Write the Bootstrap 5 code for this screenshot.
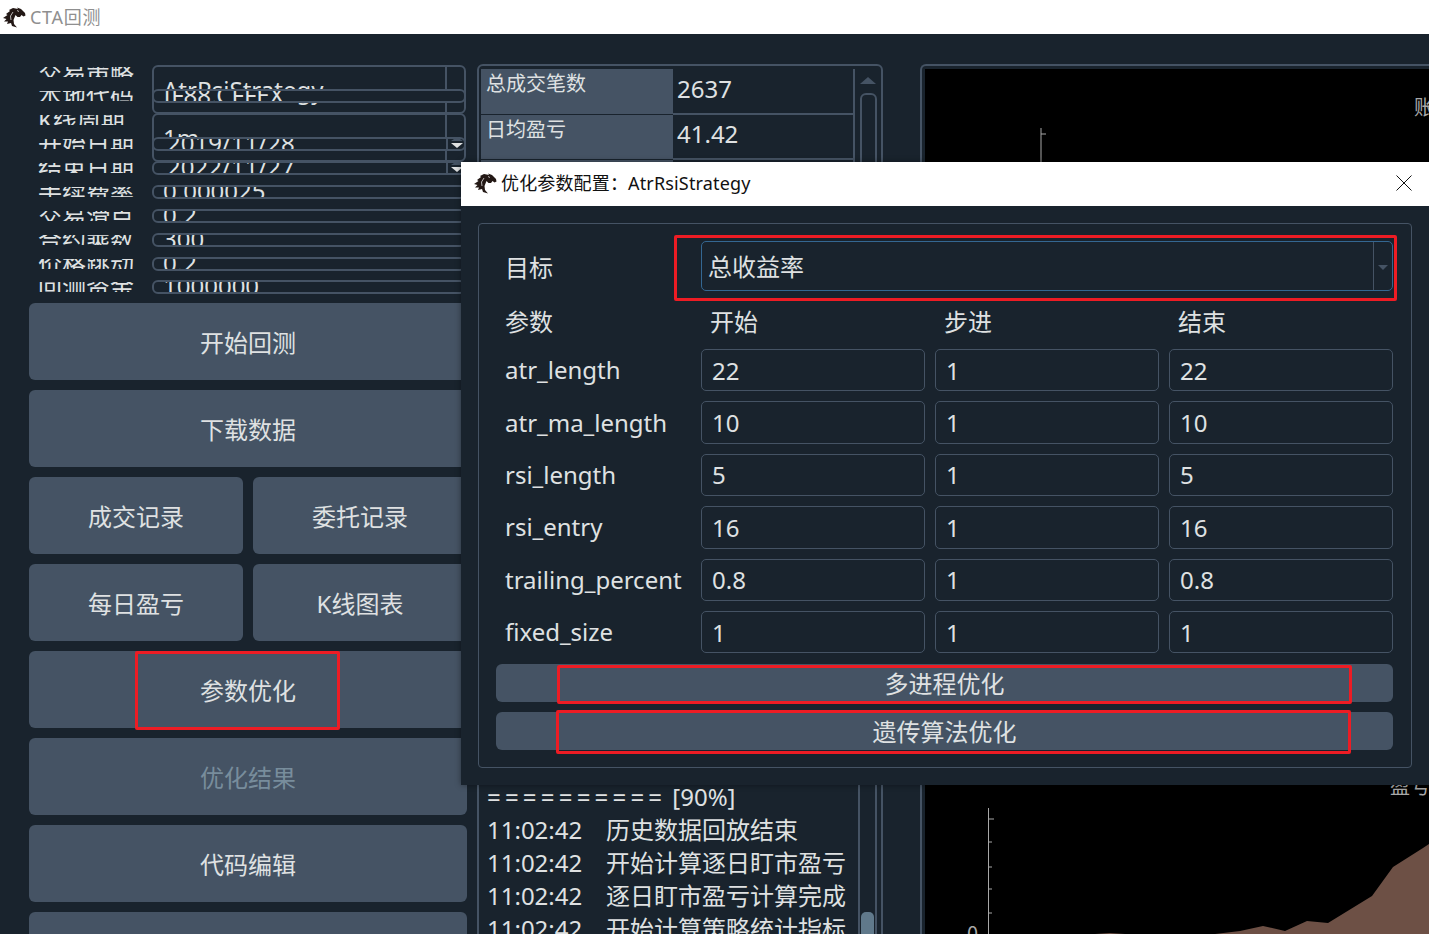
<!DOCTYPE html>
<html lang="zh">
<head>
  <meta charset="UTF-8">
  <title>CTA回测</title>
  <link rel="stylesheet" href="https://cdn.jsdelivr.net/npm/bootstrap@5.3.0/dist/css/bootstrap.min.css">
  <style>
    body {
      height: 934px; overflow: hidden; position: relative;
      background: #19232d; color: #dfe1e2;
      font-family: "Noto Sans", "Noto Sans CJK SC", sans-serif; font-size: 24px;
    }
    .title-main { height: 34px; background: #fff; color: #8f8f8f; font-size: 18px; letter-spacing: .7px; padding-left: 2px; }
    .horse { width: 24px; height: 22px; flex: none; }

    .work { padding: 30px 0 0 29px; height: 900px; overflow: hidden; gap: 10px; }
    .left-col { width: 438px; flex: none; margin-top: -4px; }

    /* squashed form, rows are narrower than the widgets in them */
    .frow { height: 24px; padding-left: 9px; padding-right: 1px; }
    .frow.tight { height: 23px; }
    .flabel { width: 114px; flex: none; height: 10px; line-height: 10px; overflow: hidden; white-space: nowrap; }
    .fedit {
      position: relative; flex: 1; height: 14px; padding: 0 9px; line-height: 7px;
      overflow: hidden; white-space: nowrap; background: #19232d;
      border: 2px solid #455364; border-radius: 6px;
    }
    .fedit.date { padding-left: 13px; }
    .fcombo {
      position: relative; flex: 1; height: 49px; align-self: flex-start; margin-top: 5px; margin-bottom: -30px;
      border: 2px solid #455364; border-radius: 6px; background: #19232d;
      padding-left: 9px; line-height: 46px; overflow: hidden;
    }
    .fcombo::after { content: ""; position: absolute; top: 0; bottom: 0; right: 17px; border-left: 2px solid #455364; }
    .dspin { position: absolute; left: 417px; top: 5px; width: 21px; height: 14px; border-left: 2px solid #455364; z-index: 2; }
    .tri-up, .tri-down { position: absolute; left: 3px; width: 0; height: 0; border-left: 6px solid transparent; border-right: 6px solid transparent; }
    .tri-up { top: 0; border-bottom: 4px solid #455364; }
    .tri-down { top: 6px; border-top: 5px solid #dfe1e2; }

    .side-btns { margin-top: 5px; gap: 10px; }
    .btn-pair { gap: 10px; }
    .act-btn.btn {
      height: 77px; flex: none; background: #455364; border: 0; border-radius: 6px;
      color: #dfe1e2; font-size: 24px; padding: 2px 0 0;
    }
    .btn-pair .act-btn.btn { flex: 1 1 0; }
    .act-btn.btn:disabled { background: #455364; color: #788d9c; opacity: 1; }

    .mid-col { width: 406px; flex: none; gap: 8px; }
    .grp { border: 2px solid #455364; border-radius: 6px; }
    .stat-grp { height: 620px; flex: none; padding: 3px 0 0 2px; position: relative; }
    .stat-tbl { width: 374px; border-collapse: collapse; }
    .stat-tbl th {
      width: 192px; height: 45px; background: #455364; font-size: 20px; font-weight: 400;
      vertical-align: top; padding: 0 5px; border-bottom: 1px solid #19232d;
    }
    .stat-tbl td { padding: 0 4px 5px; border-bottom: 2px solid #455364; border-right: 2px solid #455364; }
    .sb-up { position: absolute; left: 381px; top: 11px; width: 0; height: 0; border-left: 8px solid transparent; border-right: 8px solid transparent; border-bottom: 7px solid #455364; }
    .sb-handle { position: absolute; left: 381px; top: 27px; width: 17px; height: 200px; border: 2px solid #455364; border-radius: 6px; }

    .log-grp { height: 400px; flex: none; padding: 86px 0 0 8px; position: relative; }
    .log-line { line-height: 33px; white-space: nowrap; }
    .log-time { display: inline-block; width: 119px; }
    .log-prog { letter-spacing: 4.2px; margin-right: 6px; }
    .log-bar { position: absolute; left: 379px; top: 0; bottom: 0; width: 19px; border-left: 2px solid #455364; border-right: 2px solid #455364; }
    .log-handle { position: absolute; left: 1px; top: 218px; width: 13px; height: 60px; background: #60798b; border-radius: 5px; }

    .chart-col { flex: 1; margin-left: 27px; min-width: 0; border-right: 0; border-bottom: 0; border-radius: 6px 0 0 0; padding: 3px 0 0 3px; }
    .chart-svg { display: block; background: #000; width: 504px; height: 865px; }
    .chart-svg text { fill: #a8a8a8; font-family: "Noto Sans CJK SC", sans-serif; font-size: 20px; }

    /* dialog on top of the main window */
    .opt-dialog { position: absolute; left: 461px; top: 162px; width: 968px; height: 623px; background: #19232d; box-shadow: 0 0 6px rgba(0,0,0,.4); z-index: 5; }
    .dlg-title { height: 44px; background: #fff; color: #111; font-size: 18px; letter-spacing: .15px; padding: 0 17px 2px 12px; }
    .dlg-group { margin: 17px 17px 0 17px; height: 545px; border: 1.5px solid #455364; border-radius: 4px; padding: 17px 18px 0 17px; }
    .dlg-grid { display: grid; grid-template-columns: 195px 224px 224px 224px; grid-template-rows: 50px 38px repeat(6, 42.4px); gap: 10px; }
    .dlg-lbl { padding-left: 9px; white-space: nowrap; display: flex; align-items: center; }
    .dlg-lbl.goal { padding-top: 3px; }
    .dlg-head { padding-left: 9px; padding-top: 5px; line-height: 32px; }
    .dlg-combo { grid-column: 2 / 5; border: 1.5px solid #346792; border-radius: 5px; padding-left: 6px; line-height: 49px; position: relative; }
    .dlg-combo::after { content: ""; position: absolute; top: 0; bottom: 0; right: 18px; border-left: 1.5px solid #455364; }
    .dlg-arrow { position: absolute; right: 4px; top: 23px; width: 0; height: 0; border-left: 5px solid transparent; border-right: 5px solid transparent; border-top: 5px solid #455364; }
    .dlg-edit.form-control {
      height: 42.4px; min-height: 0; padding: 0 10px; font-size: 24px;
      color: #dfe1e2; background: #19232d; border: 1.5px solid #455364; border-radius: 5px;
    }
    .dlg-btns { margin-top: 11px; gap: 10px; }
    .dlg-btn.btn { height: 38px; background: #455364; border: 0; border-radius: 6px; color: #dfe1e2; font-size: 24px; padding: 0; line-height: 40px; }

    .red-mark { position: absolute; border: 3px solid #ed1c24; border-radius: 2px; z-index: 6; pointer-events: none; }
    .mark-combo { left: 674px; top: 235px; width: 723px; height: 66px; }
    .mark-multi { left: 557px; top: 665px; width: 795px; height: 39px; }
    .mark-ga { left: 556px; top: 710px; width: 795px; height: 44px; }
    .mark-opt { left: 135px; top: 651px; width: 205px; height: 79px; }
  </style>
</head>
<body>
<svg width="0" height="0" class="position-absolute">
  <symbol id="horse" viewBox="0 0 24 22">
    <path fill="#231815" d="M23 7 19 3 15 1.500 16 3 11 2 7 4 8 5 4 8 5.500 9 1 12 4.500 13 2 15.500 6 15.500 5 18 9 17 10 20 15 21.500 12 18 11.500 14 13.500 9 15.500 11 18 11 19.500 9 21.500 10.500 23.500 9.500z"/>
    <path fill="none" stroke="#fff" stroke-width=".7" d="M11 6 8.500 10 9 14M15 4.500 17 5.500"/>
  </symbol>
</svg>

<div class="title-main d-flex align-items-center gap-1">
  <svg class="horse"><use href="#horse"/></svg>
  <span>CTA回测</span>
</div>

<div class="work d-flex">
  <div class="left-col">
    <div class="frow d-flex align-items-center"><span class="flabel">交易策略</span><div class="fcombo">AtrRsiStrategy</div></div>
    <div class="frow d-flex align-items-center"><span class="flabel">本地代码</span><div class="fedit">IF88.CFFEX</div></div>
    <div class="frow d-flex align-items-center"><span class="flabel">K线周期</span><div class="fcombo">1m</div></div>
    <div class="frow d-flex align-items-center position-relative"><span class="flabel">开始日期</span><div class="fedit date">2019/11/28</div><div class="dspin"><i class="tri-up"></i><i class="tri-down"></i></div></div>
    <div class="frow d-flex align-items-center position-relative"><span class="flabel">结束日期</span><div class="fedit date">2022/11/27</div><div class="dspin"><i class="tri-up"></i><i class="tri-down"></i></div></div>
    <div class="frow d-flex align-items-center"><span class="flabel">手续费率</span><div class="fedit">0.000025</div></div>
    <div class="frow d-flex align-items-center"><span class="flabel">交易滑点</span><div class="fedit">0.2</div></div>
    <div class="frow d-flex align-items-center"><span class="flabel">合约乘数</span><div class="fedit">300</div></div>
    <div class="frow tight d-flex align-items-center"><span class="flabel">价格跳动</span><div class="fedit">0.2</div></div>
    <div class="frow tight d-flex align-items-center"><span class="flabel">回测资金</span><div class="fedit">1000000</div></div>

    <div class="side-btns d-flex flex-column">
      <button class="act-btn btn w-100">开始回测</button>
      <button class="act-btn btn w-100">下载数据</button>
      <div class="d-flex btn-pair"><button class="act-btn btn">成交记录</button><button class="act-btn btn">委托记录</button></div>
      <div class="d-flex btn-pair"><button class="act-btn btn">每日盈亏</button><button class="act-btn btn">K线图表</button></div>
      <button class="act-btn btn w-100">参数优化</button>
      <button class="act-btn btn w-100" disabled>优化结果</button>
      <button class="act-btn btn w-100">代码编辑</button>
      <button class="act-btn btn w-100"></button>
    </div>
  </div>

  <div class="mid-col d-flex flex-column">
    <div class="stat-grp grp">
      <table class="stat-tbl">
        <tr><th>总成交笔数</th><td>2637</td></tr>
        <tr><th>日均盈亏</th><td>41.42</td></tr>
        <tr><th></th><td></td></tr>
      </table>
      <div class="sb-up"></div>
      <div class="sb-handle"></div>
    </div>
    <div class="log-grp grp">
      <div class="log-line"><span class="log-prog">==========</span>[90%]</div>
      <div class="log-line"><span class="log-time">11:02:42</span>历史数据回放结束</div>
      <div class="log-line"><span class="log-time">11:02:42</span>开始计算逐日盯市盈亏</div>
      <div class="log-line"><span class="log-time">11:02:42</span>逐日盯市盈亏计算完成</div>
      <div class="log-line"><span class="log-time">11:02:42</span>开始计算策略统计指标</div>
      <div class="log-bar"><div class="log-handle"></div></div>
    </div>
  </div>

  <div class="chart-col grp">
    <svg class="chart-svg" viewBox="925 69 504 865">
      <text x="1414" y="115">账户净值</text>
      <path d="M1041 128V162M1041 134H1046" stroke="#a8a8a8" fill="none"/>
      <text x="1390" y="794">盈亏分布</text>
      <path d="M988.500 808V934M988.500 819H994M988.500 842H992M988.500 867H992M988.500 889H992M988.500 913H992" stroke="#a8a8a8" fill="none"/>
      <text x="967" y="941">0</text>
      <path fill="#6d5045" d="M1095 934 1110 933 1125 934H1215L1240 931 1263 926 1285 931 1307 921 1328 923 1372 896 1393 867 1423 848 1429 844V934Z"/>
    </svg>
  </div>
</div>

<div class="opt-dialog">
  <div class="dlg-title d-flex align-items-center gap-1">
    <svg class="horse"><use href="#horse"/></svg>
    <span class="flex-grow-1">优化参数配置：AtrRsiStrategy</span>
    <svg width="16" height="16" viewBox="0 0 16 16"><path d="M.5.500 15.500 15.500M15.500.500 .5 15.500" stroke="#111" fill="none"/></svg>
  </div>
  <div class="dlg-group">
    <div class="dlg-grid">
      <div class="dlg-lbl goal">目标</div>
      <div class="dlg-combo">总收益率<i class="dlg-arrow"></i></div>
      <div class="dlg-head">参数</div><div class="dlg-head">开始</div><div class="dlg-head">步进</div><div class="dlg-head">结束</div>
      <div class="dlg-lbl">atr_length</div><input class="dlg-edit form-control" value="22"><input class="dlg-edit form-control" value="1"><input class="dlg-edit form-control" value="22">
      <div class="dlg-lbl">atr_ma_length</div><input class="dlg-edit form-control" value="10"><input class="dlg-edit form-control" value="1"><input class="dlg-edit form-control" value="10">
      <div class="dlg-lbl">rsi_length</div><input class="dlg-edit form-control" value="5"><input class="dlg-edit form-control" value="1"><input class="dlg-edit form-control" value="5">
      <div class="dlg-lbl">rsi_entry</div><input class="dlg-edit form-control" value="16"><input class="dlg-edit form-control" value="1"><input class="dlg-edit form-control" value="16">
      <div class="dlg-lbl">trailing_percent</div><input class="dlg-edit form-control" value="0.8"><input class="dlg-edit form-control" value="1"><input class="dlg-edit form-control" value="0.8">
      <div class="dlg-lbl">fixed_size</div><input class="dlg-edit form-control" value="1"><input class="dlg-edit form-control" value="1"><input class="dlg-edit form-control" value="1">
    </div>
    <div class="dlg-btns d-flex flex-column">
      <button class="dlg-btn btn w-100">多进程优化</button>
      <button class="dlg-btn btn w-100">遗传算法优化</button>
    </div>
  </div>
</div>

<div class="red-mark mark-opt"></div>
<div class="red-mark mark-combo"></div>
<div class="red-mark mark-multi"></div>
<div class="red-mark mark-ga"></div>

<script src="https://cdn.jsdelivr.net/npm/bootstrap@5.3.0/dist/js/bootstrap.bundle.min.js"></script>
</body>
</html>
